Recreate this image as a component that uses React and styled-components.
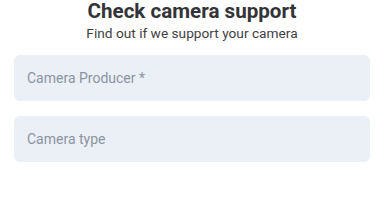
import React from 'react'
import styled, { createGlobalStyle } from 'styled-components'

const GlobalStyle = createGlobalStyle`
  html, body {
    margin: 0;
    padding: 0;
    background: #ffffff;
    font-family: Roboto, "Liberation Sans", sans-serif;
  }
`;

const Page = styled.div`
  display: flex;
  flex-direction: column;
  padding: 0 14px;
`;

const Title = styled.h1`
  margin: 0;
  font-size: 20.6px;
  line-height: 22px;
  font-weight: 700;
  color: #333438;
  text-align: center;
`;

const Subtitle = styled.p`
  margin: 2px 0 0 0;
  font-size: 13.7px;
  line-height: 18px;
  color: #3f4044;
  text-align: center;
`;

const Form = styled.div`
  display: flex;
  flex-direction: column;
  gap: 15px;
  margin-top: 13px;
`;

const Field = styled.input`
  box-sizing: border-box;
  width: 100%;
  height: 46px;
  padding: 0 13px;
  border: none;
  outline: none;
  border-radius: 6px;
  background: #eaf0f5;
  font-family: inherit;
  font-size: 14px;
  color: #333;
  &::placeholder {
    color: #8b94a2;
  }
`;

const App = () => {
  return (
    <>
      <GlobalStyle />
      <Page>
        <Title>Check camera support</Title>
        <Subtitle>Find out if we support your camera</Subtitle>
        <Form>
          <Field type="text" placeholder="Camera Producer *" />
          <Field type="text" placeholder="Camera type" />
        </Form>
      </Page>
    </>
  )
}

export default App;
